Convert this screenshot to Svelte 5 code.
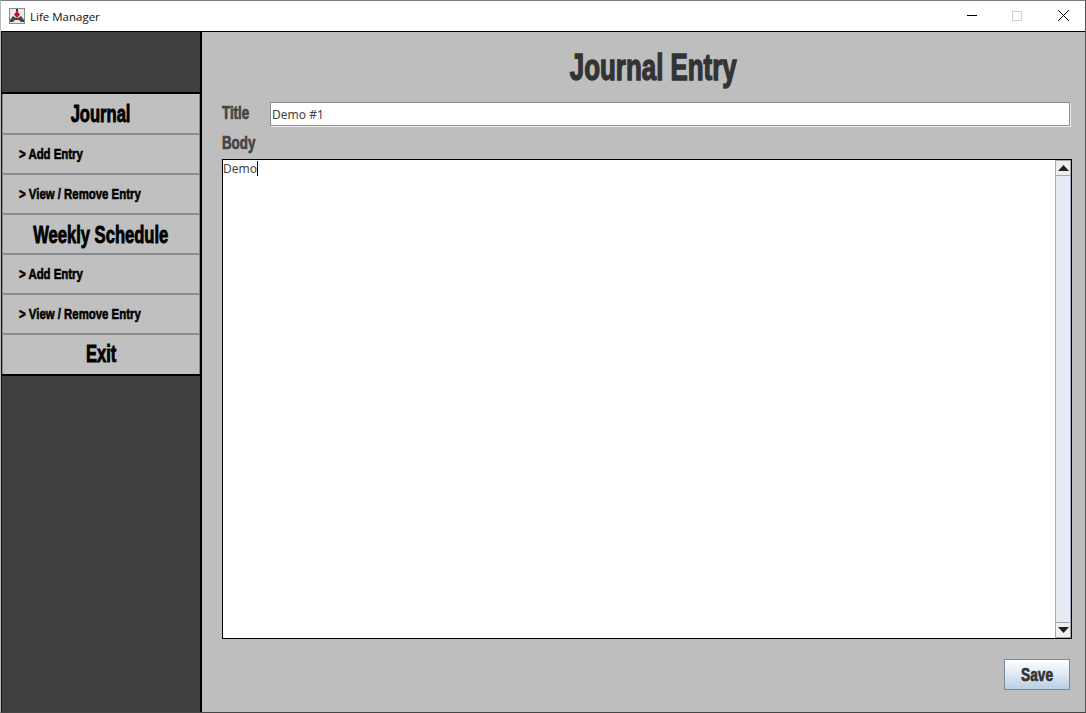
<script lang="ts">
	type NavItem = { label: string; heading: boolean };

	const navItems: NavItem[] = [
		{ label: 'Journal', heading: true },
		{ label: '> Add Entry', heading: false },
		{ label: '> View / Remove Entry', heading: false },
		{ label: 'Weekly Schedule', heading: true },
		{ label: '> Add Entry', heading: false },
		{ label: '> View / Remove Entry', heading: false },
		{ label: 'Exit', heading: true }
	];

	let title = $state('Demo #1');
</script>

<div class="window">
	<header class="titlebar">
		<svg class="app-icon" viewBox="0 0 16 16" width="16" height="16">
			<rect x="0.5" y="0.5" width="15" height="15" fill="#e8e8e8" stroke="#8a8a8a" />
			<path d="M1 12 L4 8 L7 10 H9 L12 8 L15 12 V14 H12 L10 12 H6 L4 14 H1 Z" fill="#444" />
			<path d="M8 3 L11 6.5 L8 10 L5 6.5 Z" fill="#c01030" />
			<rect x="7" y="1" width="2" height="2.5" fill="#333" />
		</svg>
		<span class="window-title">Life Manager</span>
		<div class="window-controls">
			<svg viewBox="0 0 46 30" width="46" height="30"><path d="M20 14.5 H30" stroke="#000" /></svg>
			<svg viewBox="0 0 46 30" width="46" height="30"><rect x="19.5" y="10.5" width="9" height="9" fill="none" stroke="#d0d0d0" /></svg>
			<svg viewBox="0 0 46 30" width="46" height="30"><path d="M19 9 L30 20 M30 9 L19 20" stroke="#000" fill="none" /></svg>
		</div>
	</header>

	<div class="body">
		<aside class="sidebar">
			<nav class="menu">
				{#each navItems as item}
					<button class="nav-item" class:heading={item.heading}><span>{item.label}</span></button>
				{/each}
			</nav>
		</aside>

		<main class="content">
			<h1><span>Journal Entry</span></h1>
			<div class="title-row">
				<label for="entry-title"><span>Title</span></label>
				<input id="entry-title" type="text" bind:value={title} />
			</div>
			<div class="body-label"><span>Body</span></div>
			<div class="text-area">
				<div class="text">Demo<span class="caret"></span></div>
				<div class="scrollbar">
					<div class="arrow"><svg viewBox="0 0 11 6" width="11" height="6"><path d="M5.5 0 L11 6 H0 Z" fill="#222" /></svg></div>
					<div class="thumb"></div>
					<div class="arrow"><svg viewBox="0 0 11 6" width="11" height="6"><path d="M0 0 H11 L5.5 6 Z" fill="#222" /></svg></div>
				</div>
			</div>
			<div class="actions">
				<button class="save"><span>Save</span></button>
			</div>
		</main>
	</div>
</div>

<style>
	:global(body) {
		margin: 0;
		background: #bebebe;
	}

	.window {
		width: 1086px;
		height: 713px;
		display: flex;
		flex-direction: column;
		box-sizing: border-box;
		border-top: 1px solid #7a7a7a;
		border-right: 1px solid #555;
		border-bottom: 1px solid #444;
		border-left: 1px solid #bbb;
		overflow: hidden;
		font-family: 'Liberation Sans', Arial, sans-serif;
	}

	.titlebar {
		height: 30px;
		flex: none;
		display: flex;
		align-items: center;
		background: #fff;
		border-bottom: 1px solid #000;
		padding-left: 8px;
	}

	.app-icon {
		margin-right: 5px;
	}

	.window-title {
		font-family: 'Open Sans', 'Noto Sans', sans-serif;
		font-size: 11.5px;
		color: #111;
	}

	.window-controls {
		margin-left: auto;
		display: flex;
	}

	.body {
		flex: 1;
		display: flex;
		min-height: 0;
	}

	.sidebar {
		width: 201px;
		flex: none;
		box-sizing: border-box;
		background: #404040;
		border-left: 1px solid #111;
		border-right: 2px solid #000;
		padding-top: 60px;
	}

	.menu {
		display: flex;
		flex-direction: column;
		border-top: 2px solid #000;
		border-bottom: 2px solid #000;
	}

	.nav-item {
		height: 40px;
		box-sizing: border-box;
		background: #c0c0c0;
		border: 1px solid #8a8a92;
		border-top: 0;
		border-bottom-width: 2px;
		margin: 0;
		padding: 0 0 2px 16px;
		text-align: left;
		color: #000;
		font-family: 'Liberation Sans', sans-serif;
		font-weight: 700;
		font-size: 15px;
		-webkit-text-stroke: 0.6px #000;
	}

	.nav-item span {
		display: inline-block;
		transform: scaleX(0.76);
		transform-origin: left center;
		white-space: nowrap;
	}

	.nav-item.heading {
		padding: 2px 0 0;
		text-align: center;
		font-size: 23px;
		-webkit-text-stroke: 0.9px #000;
	}

	.nav-item.heading span {
		transform: scaleX(0.72);
		transform-origin: center;
	}

	.nav-item:first-child {
		height: 41px;
	}

	.nav-item:last-child {
		height: 39px;
		border-bottom: 0;
		padding-top: 0;
	}

	.content {
		flex: 1;
		min-width: 0;
		display: flex;
		flex-direction: column;
		background: #bebebe;
		padding: 0 15px 0 20px;
	}

	h1 {
		margin: 0;
		height: 70px;
		line-height: 72px;
		text-align: center;
		font-family: 'Liberation Sans', sans-serif;
		font-size: 37px;
		font-weight: 700;
		color: #333;
		-webkit-text-stroke: 1.4px #333;
	}

	h1 span {
		display: inline-block;
		transform: scaleX(0.7);
		margin-left: 14px;
		white-space: nowrap;
	}

	.title-row {
		display: flex;
		align-items: center;
		height: 24px;
	}

	label,
	.body-label {
		font-family: 'Liberation Sans', sans-serif;
		font-weight: 700;
		font-size: 18px;
		color: #444;
		-webkit-text-stroke: 0.7px #444;
	}

	label span,
	.body-label span {
		display: inline-block;
		transform: scaleX(0.74);
		transform-origin: left center;
	}

	label {
		width: 48px;
		flex: none;
		position: relative;
		top: -1px;
	}

	input {
		flex: 1;
		min-width: 0;
		height: 24px;
		box-sizing: border-box;
		border: 1px solid #8c8c8c;
		box-shadow: 1px 1px 0 #f0f0f0;
		background: #fff;
		padding: 0 1px;
		font-family: 'Noto Sans', 'Open Sans', sans-serif;
		font-size: 12px;
		color: #444;
	}

	.body-label {
		height: 33px;
		line-height: 34px;
		flex: none;
	}

	.text-area {
		height: 480px;
		flex: none;
		box-sizing: border-box;
		display: flex;
		background: #fff;
		border: 1px solid #000;
		margin-right: -2px;
	}

	.text {
		flex: 1;
		padding: 1px 0 0 0;
		font-family: 'Noto Sans', 'Open Sans', sans-serif;
		font-size: 12px;
		line-height: 16px;
		color: #444;
	}

	.caret {
		display: inline-block;
		width: 1px;
		height: 15px;
		background: #000;
		vertical-align: -3px;
	}

	.scrollbar {
		width: 16px;
		flex: none;
		display: flex;
		flex-direction: column;
		background: #eef0f4;
		box-sizing: border-box;
	}

	.arrow {
		height: 16px;
		flex: none;
		display: flex;
		align-items: center;
		justify-content: center;
		box-sizing: border-box;
		background: #eeeeee;
		border: 1px solid #a8a8a8;
	}

	.thumb {
		flex: 1;
		background: #e6ebf3;
		border: 1px solid #a3aec4;
		border-top: 0;
		border-bottom: 0;
	}

	.actions {
		display: flex;
		justify-content: flex-end;
		margin-top: 20px;
	}

	.save {
		width: 66px;
		height: 31px;
		box-sizing: border-box;
		border: 1px solid #7a8a99;
		background: linear-gradient(#ffffff, #e4edf5 40%, #b8cfe4);
		padding: 2px 0 0;
		font-family: 'Liberation Sans', sans-serif;
		font-weight: 700;
		font-size: 18px;
		color: #333;
		-webkit-text-stroke: 0.7px #333;
	}

	.save span {
		display: inline-block;
		transform: scaleX(0.76);
	}
</style>
